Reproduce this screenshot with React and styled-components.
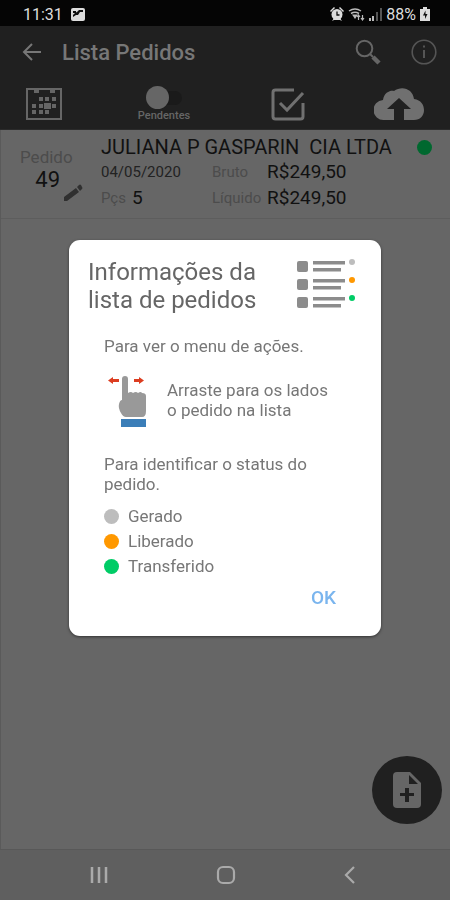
import React, { useState } from 'react'
import styled, { createGlobalStyle } from 'styled-components'

const STATUS = [
    { label: 'Gerado', color: '#bdbdbd' },
    { label: 'Liberado', color: '#ff9800' },
    { label: 'Transferido', color: '#0c6' },
]

function App() {
    const [open, setOpen] = useState(true);
    const [pending, setPending] = useState(false);

    return (
        <Screen>
            <GlobalStyle />
            <StatusBar>
                <span>11:31</span>
                <PictureIcon />
                <Spacer />
                <AlarmIcon />
                <WifiIcon />
                <SignalIcon />
                <span>88%</span>
                <BatteryIcon />
            </StatusBar>
            <Header>
                <TitleRow>
                    <IconButton aria-label="Voltar"><BackIcon /></IconButton>
                    <h1>Lista Pedidos</h1>
                    <IconButton aria-label="Buscar"><SearchIcon /></IconButton>
                    <IconButton aria-label="Informações" onClick={() => setOpen(true)}><InfoIcon /></IconButton>
                </TitleRow>
                <Actions>
                    <IconButton aria-label="Calendário"><CalendarIcon /></IconButton>
                    <Toggle>
                        <input type="checkbox" checked={pending} onChange={e => setPending(e.target.checked)} />
                        <span>Pendentes</span>
                    </Toggle>
                    <IconButton aria-label="Selecionar"><CheckIcon /></IconButton>
                    <IconButton aria-label="Enviar"><CloudIcon /></IconButton>
                </Actions>
            </Header>
            <Main>
                <Order>
                    <Number>
                        <Label>Pedido</Label>
                        <strong>49</strong>
                        <PencilIcon />
                    </Number>
                    <Details>
                        <Customer>
                            <h2>JULIANA P GASPARIN&nbsp; CIA LTDA</h2>
                            <Dot $color="#00682f" />
                        </Customer>
                        <Line>
                            <time dateTime="2020-05-04">04/05/2020</time>
                            <Label $small>Bruto</Label>
                            <strong>R$249,50</strong>
                        </Line>
                        <Line>
                            <Pieces><Label $small>Pçs</Label><strong>5</strong></Pieces>
                            <Label $small>Líquido</Label>
                            <strong>R$249,50</strong>
                        </Line>
                    </Details>
                </Order>
                <AddButton aria-label="Novo pedido"><AddFileIcon /></AddButton>
            </Main>
            <NavBar>
                <IconButton aria-label="Recentes"><RecentsIcon /></IconButton>
                <IconButton aria-label="Início"><HomeIcon /></IconButton>
                <IconButton aria-label="Retornar"><ChevronIcon /></IconButton>
            </NavBar>
            {open &&
                <Overlay>
                    <Dialog role="dialog" aria-labelledby="dialog-title">
                        <DialogHeader>
                            <h2 id="dialog-title">Informações da lista de pedidos</h2>
                            <ListIcon />
                        </DialogHeader>
                        <DialogBody>
                            <p>Para ver o menu de ações.</p>
                            <Swipe>
                                <HandIcon />
                                <p>Arraste para os lados o pedido na lista</p>
                            </Swipe>
                            <p>Para identificar o status do pedido.</p>
                            <Legend>
                                {STATUS.map(item =>
                                    <li key={item.label}><Dot $color={item.color} />{item.label}</li>
                                )}
                            </Legend>
                        </DialogBody>
                        <OkButton onClick={() => setOpen(false)}>OK</OkButton>
                    </Dialog>
                </Overlay>
            }
        </Screen>
    )
}

export default App

const PictureIcon = () => (
    <svg width="14" height="14" viewBox="0 0 14 14">
        <rect width="14" height="13" y="1" rx="2" fill="#ddd" />
        <path d="M2 4h3v2H2zM6 5l2-2h4v2H9L7 8H5L2 10V8l2-2z" fill="#111" />
    </svg>
)

const AlarmIcon = () => (
    <svg width="14" height="14" viewBox="0 0 14 14">
        <path d="M0 4 4 0l1 1-4 4zM14 4l-4-4-1 1 4 4zM2 14l2-3h6l2 3-2-1H4z" fill="#ddd" />
        <circle cx="7" cy="7.5" r="5.5" fill="#ddd" />
        <path d="M7 4.5V8h2.5" fill="none" stroke="#111" strokeWidth="1.3" />
    </svg>
)

const WifiIcon = () => (
    <svg width="17" height="14" viewBox="0 0 17 14" fill="none" stroke="#bbb" strokeWidth="1.5">
        <path d="M1 4Q7 0 13 4M3 6.5Q7 4 11 6.5" />
        <path d="M4 7.5h6L7 12z" fill="#bbb" stroke="none" />
        <path d="M10.500 13V8.500M9 10l1.500-2L12 10M14.500 8v4.500M13 11l1.500 2 1.500-2" strokeWidth="1.2" />
    </svg>
)

const SignalIcon = () => (
    <svg width="13" height="14" viewBox="0 0 13 14">
        <path d="M0 11h2v3H0zM3 9h2v5H3z" fill="#bbb" />
        <path d="M7 5h2v9H7zM11 1h2v13h-2z" fill="#555" />
    </svg>
)

const BatteryIcon = () => (
    <svg width="10" height="14" viewBox="0 0 10 14">
        <path d="M3 0h4v2h3v12H0V2h3z" fill="#ddd" />
        <path d="M5.500 3.500 3 8.500h2v3.500l2.500-5h-2z" fill="#111" />
    </svg>
)

const BackIcon = () => (
    <svg width="20" height="20" viewBox="0 0 20 20" fill="none" stroke="#777" strokeWidth="2">
        <path d="M19 10H2M10 2l-8 8 8 8" />
    </svg>
)

const SearchIcon = () => (
    <svg width="26" height="26" viewBox="0 0 26 26" fill="none" stroke="#666">
        <circle cx="9.5" cy="9.5" r="7.8" strokeWidth="2" />
        <path d="m15 15 3 3" strokeWidth="2" />
        <path d="m18 18 6 6" strokeWidth="4.5" />
    </svg>
)

const InfoIcon = () => (
    <svg width="26" height="26" viewBox="0 0 26 26" fill="none" stroke="#555" strokeWidth="1.6">
        <circle cx="13" cy="13" r="11.8" />
        <path d="M13 11v8M13 6.500v2" strokeWidth="2" />
    </svg>
)

const CalendarIcon = () => (
    <svg width="36" height="32" viewBox="0 0 36 32">
        <path d="M1 1h34v30H1z" fill="none" stroke="#666" strokeWidth="2" />
        <path d="M8 0h5v5H8zM24 0h5v5h-5z" fill="#666" />
        <g fill="#666">
            <path d="M13 9h4v4h-4zM19 9h4v4h-4zM26 9h4v4h-4zM6 16h4v4H6zM13 16h4v4h-4zM26 16h4v4h-4zM6 22h4v4H6zM13 22h4v4h-4zM19 22h4v4h-4z" />
            <path d="M18 15h7v6h-7z" />
        </g>
    </svg>
)

const CheckIcon = () => (
    <svg width="34" height="34" viewBox="0 0 34 34" fill="none" stroke="#707070" strokeWidth="3">
        <path d="M23 3H4.500Q2 3 2 5.500v24Q2 32 4.500 32h25q2.500 0 2.500-2.500V16" />
        <path d="m9 16 7 7L32 6" />
    </svg>
)

const CloudIcon = () => (
    <svg width="50" height="34" viewBox="0 0 50 34">
        <path d="M20 33H10A10 10 0 0 1 9 13C10 5 17 3 20 4c8-6 19-2 20 8 7 1 10 6 10 11 0 6-4 10-10 10H30V22h7L25 11 13 22h7z" fill="#707070" />
    </svg>
)

const PencilIcon = () => (
    <svg width="20" height="18" viewBox="0 0 20 18" fill="#303030">
        <path d="M1 17v-4L13 4l3 4L4 17zM14 3l2-2q1-1 2 0l1 2q1 1 0 2l-2 2z" />
    </svg>
)

const AddFileIcon = () => (
    <svg width="28" height="36" viewBox="0 0 28 36">
        <path d="M4 0h13l11 11v21q0 4-4 4H4q-4 0-4-4V4q0-4 4-4z" fill="#666" />
        <path d="M16 3v9h9zM12 16h4v5h5v3h-5v6h-4v-6H7v-3h5z" fill="#202020" />
    </svg>
)

const RecentsIcon = () => (
    <svg width="18" height="18" viewBox="0 0 18 18" stroke="#aaa" strokeWidth="2.5">
        <path d="M2 1v16M9 1v16M16 1v16" />
    </svg>
)

const HomeIcon = () => (
    <svg width="20" height="20" viewBox="0 0 20 20" fill="none" stroke="#aaa" strokeWidth="2.2">
        <rect x="2" y="2" width="16" height="16" rx="5" />
    </svg>
)

const ChevronIcon = () => (
    <svg width="12" height="18" viewBox="0 0 12 18" fill="none" stroke="#aaa" strokeWidth="2.2">
        <path d="M10 1 2 9l8 8" />
    </svg>
)

const ListIcon = () => (
    <svg width="60" height="50" viewBox="0 0 60 50">
        {[
            [0, '#bdbdbd'],
            [18, '#ff9800'],
            [36, '#0c6'],
        ].map(([y, color]) =>
            <g key={y} fill="#8c8c8c">
                <rect y={y + 3} width="11" height="11" rx="2" />
                <rect x="16" y={y + 3} width="32" height="3.5" />
                <rect x="16" y={y + 10} width="28" height="3.5" />
                <circle cx="55" cy={y + 4} r="3" fill={color} />
            </g>
        )}
    </svg>
)

const HandIcon = () => (
    <svg width="40" height="56" viewBox="0 -4 40 56">
        <path d="M0 4.500 5 1v2h6v3H5v2zM36 4.500 31 1v2h-5v3h5v2z" fill="#dc3d20" />
        <path d="M14 3q0-3 3-3t3 3v14q3-2 5 0 3-2 5 0 3-2 4 0 4 0 4 3v15q0 6-4 6H18q-3 0-5-4-3-5-2-9 1-4 3-4z" fill="#999" />
        <path d="M13 43h25v8H13z" fill="#3b7eb8" />
    </svg>
)

const GlobalStyle = createGlobalStyle`
    * {
        box-sizing: border-box;
    }

    body {
        margin: 0;
        background: #666;
        font-family: Roboto, "Liberation Sans", sans-serif;
    }

    h1, h2, p, ul {
        margin: 0;
        padding: 0;
    }

    button {
        font-family: inherit;
    }

    svg {
        display: block;
        flex-shrink: 0;
    }
`

const Screen = styled.div`
    min-height: 100vh;
    display: flex;
    flex-direction: column;
    background: #666;
`

const StatusBar = styled.div`
    height: 26px;
    display: flex;
    align-items: center;
    gap: 4px;
    padding: 2px 20px 0 23px;
    background: #050505;
    color: #ddd;
    font-size: 16px;

    span:first-child {
        margin-right: 4px;
    }
`

const Spacer = styled.div`
    flex: 1;
`

const Header = styled.header`
    background: #202020;
`

const TitleRow = styled.div`
    height: 52px;
    display: flex;
    align-items: center;
    padding: 0 13px 0 22px;

    h1 {
        flex: 1;
        margin-left: 20px;
        font-size: 22px;
        font-weight: 500;
        color: #777;
    }

    button + button {
        margin-left: 30px;
    }
`

const IconButton = styled.button`
    display: flex;
    align-items: center;
    justify-content: center;
    padding: 0;
    border: 0;
    background: none;
    cursor: pointer;
`

const Actions = styled.div`
    height: 52px;
    display: grid;
    grid-template-columns: 76px 1fr 1fr 74px;
    align-items: center;
    justify-items: center;
    padding: 0 26px;
    border-bottom: 1px solid #2a2a2a;

    > :first-child {
        justify-self: start;
    }

    > :last-child {
        justify-self: end;
    }
`

const Toggle = styled.label`
    display: flex;
    flex-direction: column;
    align-items: center;
    font-size: 11px;
    font-weight: 500;
    line-height: 12px;
    color: #666;

    input {
        appearance: none;
        display: grid;
        align-items: center;
        width: 36px;
        height: 24px;
        margin: 0;
        cursor: pointer;
    }

    input::before,
    input::after {
        content: '';
        grid-area: 1 / 1;
    }

    input::before {
        height: 14px;
        margin-left: 4px;
        border-radius: 7px;
        background: #1a1a1a;
    }

    input::after {
        width: 23px;
        height: 23px;
        border-radius: 50%;
        background: #666;
    }

    input:checked::after {
        justify-self: end;
    }
`

const Main = styled.main`
    flex: 1;
    display: flex;
    flex-direction: column;
    justify-content: space-between;
    border-left: 1px solid #5a5a5a;
`

const Order = styled.article`
    display: flex;
    padding: 6px 18px 7px 0;
    border-bottom: 1px solid #5d5d5d;

    strong {
        font-weight: 400;
        color: #111;
    }
`

const Number = styled.div`
    width: 100px;
    display: grid;
    grid-template-columns: 40px 20px;
    column-gap: 3px;
    align-content: start;
    padding: 12px 0 0 19px;

    span {
        grid-column: 1 / 3;
        line-height: 18px;
    }

    strong {
        font-size: 22px;
        line-height: 28px;
        text-align: right;
    }

    svg {
        align-self: end;
        margin-bottom: -8px;
    }
`

const Label = styled.span`
    font-size: ${props => props.$small ? '15px' : '17px'};
    color: #4c4c4c;
`

const Details = styled.div`
    flex: 1;
`

const Customer = styled.div`
    display: flex;
    align-items: center;
    justify-content: space-between;

    h2 {
        font-size: 20px;
        font-weight: 400;
        line-height: 23px;
        color: #111;
        white-space: nowrap;
    }
`

const Line = styled.div`
    display: grid;
    grid-template-columns: 111px 55px 1fr;
    align-items: center;
    font-size: 15px;
    line-height: 26px;
    color: #222;

    strong {
        font-size: 19px;
    }
`

const Pieces = styled.div`
    display: flex;
    gap: 6px;
`

const Dot = styled.span`
    flex-shrink: 0;
    width: 15px;
    height: 15px;
    border-radius: 50%;
    background: ${props => props.$color};
`

const AddButton = styled(IconButton)`
    align-self: flex-end;
    width: 70px;
    height: 68px;
    margin: 0 8px 25px;
    border-radius: 50%;
    background: #202020;
`

const NavBar = styled.nav`
    height: 51px;
    display: flex;
    align-items: center;
    justify-content: space-between;
    padding: 0 94px 0 90px;
    border-top: 1px solid #585858;
    background: #5f5f5f;
`

const Overlay = styled.div`
    position: fixed;
    top: 26px;
    right: 0;
    bottom: 51px;
    left: 0;
    display: flex;
    align-items: center;
    justify-content: center;
`

const Dialog = styled.section`
    width: calc(100% - 138px);
    max-width: 400px;
    padding: 18px 24px 23px 19px;
    display: flex;
    flex-direction: column;
    border-radius: 11px;
    background: #fff;
    box-shadow: 0 1px 3px rgba(0, 0, 0, .5);
    color: #777;
`

const DialogHeader = styled.div`
    display: flex;
    justify-content: space-between;

    h2 {
        max-width: 180px;
        font-size: 24px;
        font-weight: 400;
        line-height: 28px;
        color: #666;
    }
`

const DialogBody = styled.div`
    padding: 22px 0 0 16px;
    font-size: 17px;
    line-height: 20px;
`

const Swipe = styled.div`
    display: flex;
    align-items: center;
    gap: 19px;
    margin: 16px 0 26px 4px;

    p {
        max-width: 170px;
    }
`

const Legend = styled.ul`
    margin-top: 10px;
    list-style: none;

    li {
        display: flex;
        align-items: center;
        gap: 9px;
        line-height: 25px;
    }
`

const OkButton = styled.button`
    align-self: flex-end;
    margin: 4px 11px 0 0;
    padding: 3px 10px;
    border: 0;
    background: none;
    font-size: 19px;
    font-weight: 500;
    line-height: 24px;
    color: #7ab5ee;
    cursor: pointer;
`
